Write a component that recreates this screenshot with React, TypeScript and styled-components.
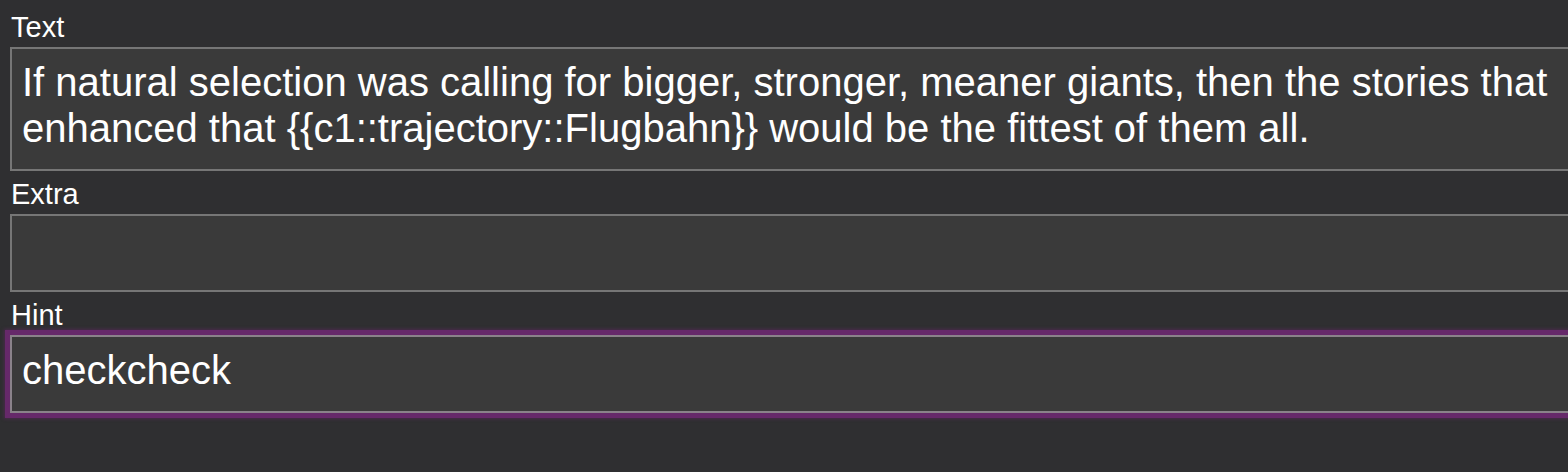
import * as React from 'react'
import styled, { createGlobalStyle } from 'styled-components'

const GlobalStyle = createGlobalStyle`
  html, body {
    margin: 0;
    padding: 0;
    background-color: #2f2f31;
    overflow: hidden;
  }
  body {
    font-family: "Liberation Sans", Arial, sans-serif;
    color: #ffffff;
  }
`

const Editor = styled.div`
  display: flex;
  flex-direction: column;
  padding: 4px 0 0 10px;
  margin-right: -40px;
  height: 472px;
  box-sizing: border-box;
`

const Field = styled.div`
  display: flex;
  flex-direction: column;
  margin-top: 6px;
`

const Label = styled.div`
  font-size: 29px;
  line-height: 34px;
  padding-left: 1px;
  margin-bottom: 3px;
`

const Box = styled.div<{ $focused?: boolean }>`
  background-color: #3a3a3a;
  border: 2px solid ${(p) => (p.$focused ? '#8a828a' : '#767676')};
  font-size: 40px;
  line-height: 46px;
  min-height: 46px;
  padding: 10px 40px 18px 10px;
  color: #ffffff;
  box-shadow: ${(p) => (p.$focused ? '0 0 0 5px #66296a, 0 0 3px 6px #4a2a4c' : 'none')};
`

const fields = [
  {
    name: 'Text',
    value:
      'If natural selection was calling for bigger, stronger, meaner giants, then the stories that enhanced that {{c1::trajectory::Flugbahn}} would be the fittest of them all.',
  },
  { name: 'Extra', value: '' },
  { name: 'Hint', value: 'checkcheck', focused: true },
]

export default function App() {
  return (
    <>
      <GlobalStyle />
      <Editor>
        {fields.map((f) => (
          <Field key={f.name}>
            <Label>{f.name}</Label>
            <Box $focused={f.focused}>{f.value}</Box>
          </Field>
        ))}
      </Editor>
    </>
  )
}
